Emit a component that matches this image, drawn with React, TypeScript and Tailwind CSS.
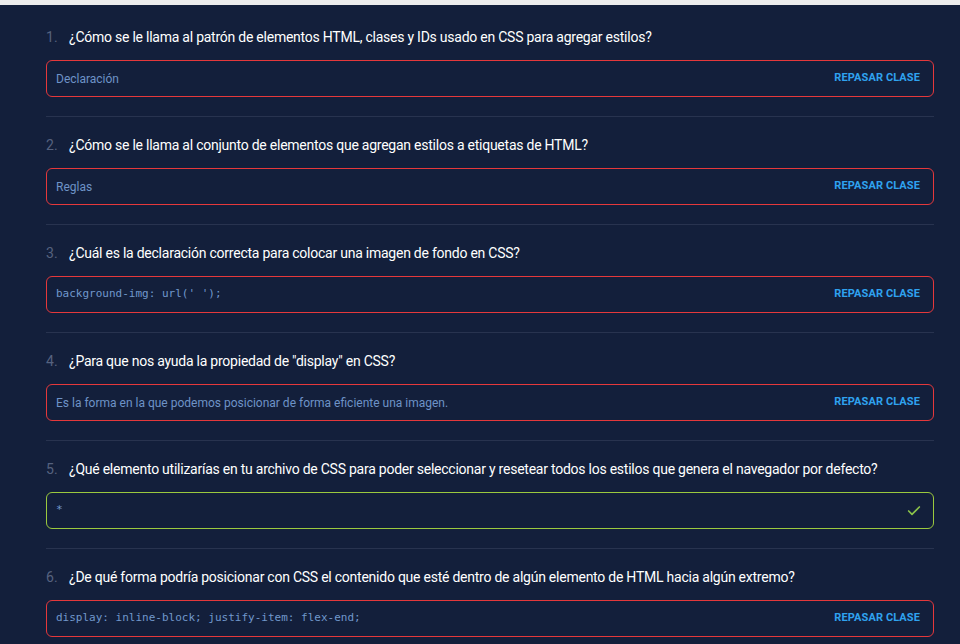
import { Check } from "lucide-react";

type Pregunta = {
  texto: string;
  respuesta: string;
  codigo?: boolean;
  correcta?: boolean;
};

const preguntas: Pregunta[] = [
  {
    texto: "¿Cómo se le llama al patrón de elementos HTML, clases y IDs usado en CSS para agregar estilos?",
    respuesta: "Declaración",
  },
  {
    texto: "¿Cómo se le llama al conjunto de elementos que agregan estilos a etiquetas de HTML?",
    respuesta: "Reglas",
  },
  {
    texto: "¿Cuál es la declaración correcta para colocar una imagen de fondo en CSS?",
    respuesta: "background-img: url(' ');",
    codigo: true,
  },
  {
    texto: "¿Para que nos ayuda la propiedad de \"display\" en CSS?",
    respuesta: "Es la forma en la que podemos posicionar de forma eficiente una imagen.",
  },
  {
    texto: "¿Qué elemento utilizarías en tu archivo de CSS para poder seleccionar y resetear todos los estilos que genera el navegador por defecto?",
    respuesta: "*",
    codigo: true,
    correcta: true,
  },
  {
    texto: "¿De qué forma podría posicionar con CSS el contenido que esté dentro de algún elemento de HTML hacia algún extremo?",
    respuesta: "display: inline-block; justify-item: flex-end;",
    codigo: true,
  },
];

export default function App() {
  return (
    <div className="w-[960px] h-[644px] overflow-hidden bg-[#131f3b] font-['Roboto',sans-serif]">
      <div className="h-[5px] bg-[#ececec]" />
      <div className="pl-[46px] pr-[26px] pt-[4px]">
        {preguntas.map((p, i) => (
          <div key={i} className="pt-[18px] pb-[19px] border-b border-[#28334f]">
            {/* Pregunta */}
            <div className="flex items-center h-5 text-[14px] leading-5">
              <span className="w-[23px] text-[#56627f]">{i + 1}.</span>
              <span className="text-white tracking-[-0.24px]">{p.texto}</span>
            </div>

            {/* Respuesta */}
            <div
              className={
                "mt-[13px] h-[37px] flex items-center justify-between rounded-md border pl-[9px] pr-[13px] " +
                (p.correcta ? "border-[#9bc93e]" : "border-[#e5383b]")
              }
            >
              <span
                className={
                  p.codigo
                    ? "text-[11px] text-[#7198cc] font-['DejaVu_Sans_Mono',monospace]"
                    : "text-[12px] text-[#6e93c7]"
                }
              >
                {p.respuesta}
              </span>
              {p.correcta ? (
                <Check className="w-4 h-4 text-[#8bc34a] mr-[-2px]" strokeWidth={2.5} />
              ) : (
                <span className="text-[11px] font-bold text-[#2fa2ef] tracking-[0.1px]">REPASAR CLASE</span>
              )}
            </div>
          </div>
        ))}
      </div>
    </div>
  );
}
